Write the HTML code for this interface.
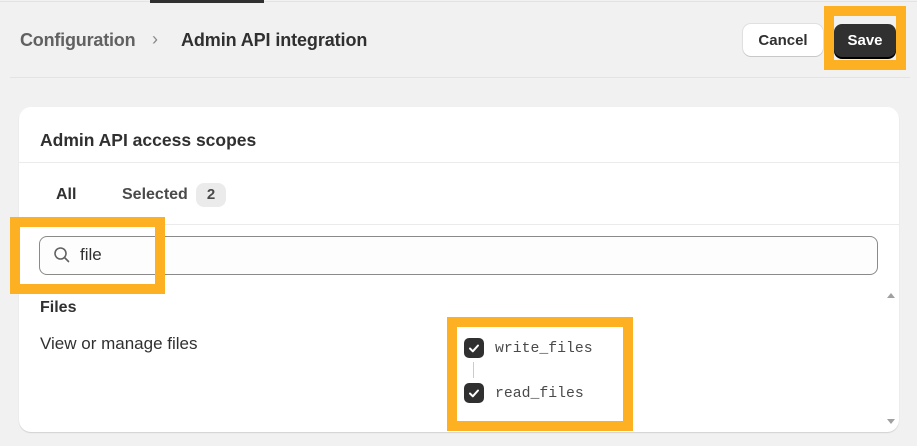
<!DOCTYPE html>
<html style="overflow:hidden;width:917px;height:446px"><head><style>
*{box-sizing:border-box;margin:0;padding:0}
body{width:917px;height:446px;background:#f1f1f1;font-family:"Liberation Sans",sans-serif;position:relative;overflow:hidden;color:#303030}
.a{position:absolute}
.ob{position:absolute;border:10px solid #fdb022}
</style></head><body>
<div class="a" style="left:0;top:1px;width:917px;height:1px;background:#e3e3e3"></div>
<div class="a" style="left:150px;top:0;width:114px;height:3px;background:#303030"></div>
<div class="a" style="left:20px;top:30px;font-size:18px;font-weight:bold;color:#616161;letter-spacing:-0.2px">Configuration</div>
<div class="a" style="left:152px;top:29px;font-size:18px;color:#8a8a8a">›</div>
<div class="a" style="left:181px;top:30px;font-size:18px;font-weight:bold;color:#303030;letter-spacing:-0.1px">Admin API integration</div>
<div class="a" style="left:743px;top:24px;width:80px;height:32px;background:#fff;border-radius:8px;box-shadow:0 1px 0 #c8c8c8,0 0 0 1px #e0e0e0;font-size:15px;font-weight:bold;text-align:center;line-height:33px">Cancel</div>
<div class="ob" style="left:824px;top:6px;width:82px;height:64px"></div>
<div class="a" style="left:834px;top:24px;width:62px;height:33px;background:#303030;border-radius:8px;box-shadow:0 2px 0 #000;color:#fff;font-size:15px;font-weight:bold;text-align:center;line-height:33px">Save</div>
<div class="a" style="left:10px;top:77px;width:900px;height:1px;background:#e3e3e3"></div>
<div class="a" style="left:19px;top:107px;width:880px;height:325px;background:#fff;border-radius:12px;box-shadow:0 1px 1px #d0d0d0"></div>
<div class="a" style="left:40px;top:130px;font-size:17.5px;font-weight:bold">Admin API access scopes</div>
<div class="a" style="left:19px;top:162px;width:880px;height:1px;background:#ebebeb"></div>
<div class="a" style="left:56px;top:186px;font-size:16px;font-weight:bold">All</div>
<div class="a" style="left:122px;top:186px;font-size:16px;font-weight:bold;color:#4a4a4a">Selected</div>
<div class="a" style="left:196px;top:183px;width:30px;height:24px;background:#ebebeb;border-radius:8px;font-size:15px;font-weight:bold;color:#4a4a4a;text-align:center;line-height:24px">2</div>
<div class="a" style="left:19px;top:224px;width:880px;height:1px;background:#ebebeb"></div>
<div class="a" style="left:39px;top:236px;width:839px;height:39px;background:#fdfdfd;border:1px solid #8a8a8a;border-radius:8px"></div>
<svg class="a" style="left:53px;top:246px" width="18" height="18" viewBox="0 0 18 18"><circle cx="7.5" cy="7.5" r="5.5" fill="none" stroke="#616161" stroke-width="1.6"/><path d="M11.5 11.5l4 4" stroke="#616161" stroke-width="1.6" stroke-linecap="round"/></svg>
<div class="a" style="left:80px;top:245px;font-size:17px">file</div>
<div class="ob" style="left:10px;top:217px;width:155px;height:77px"></div>
<div class="a" style="left:40px;top:299px;font-size:16px;font-weight:bold">Files</div>
<div class="a" style="left:40px;top:334px;font-size:17px">View or manage files</div>
<div class="ob" style="left:447px;top:317px;width:186px;height:114px"></div>
<div class="a" style="left:464px;top:338px;width:20px;height:20px;background:#303030;border-radius:5px"></div>
<svg class="a" style="left:464px;top:338px" width="20" height="20"><path d="M6 10.5l2.8 2.8L14 7.5" fill="none" stroke="#fff" stroke-width="2" stroke-linecap="round" stroke-linejoin="round"/></svg>
<div class="a" style="left:473px;top:362px;width:1px;height:16px;background:#ccc"></div>
<div class="a" style="left:464px;top:383px;width:20px;height:20px;background:#303030;border-radius:5px"></div>
<svg class="a" style="left:464px;top:383px" width="20" height="20"><path d="M6 10.5l2.8 2.8L14 7.5" fill="none" stroke="#fff" stroke-width="2" stroke-linecap="round" stroke-linejoin="round"/></svg>
<div class="a" style="left:495px;top:341px;font-family:'Liberation Mono',monospace;font-size:14.8px;color:#4a4a4a">write_files</div>
<div class="a" style="left:495px;top:386px;font-family:'Liberation Mono',monospace;font-size:14.8px;color:#4a4a4a">read_files</div>
<svg class="a" style="left:886px;top:291px" width="10" height="8"><path d="M1 7L5 2L9 7Z" fill="#a0a0a0"/></svg>
<svg class="a" style="left:886px;top:418px" width="10" height="8"><path d="M1 1L5 6L9 1Z" fill="#a0a0a0"/></svg>
</body></html>
